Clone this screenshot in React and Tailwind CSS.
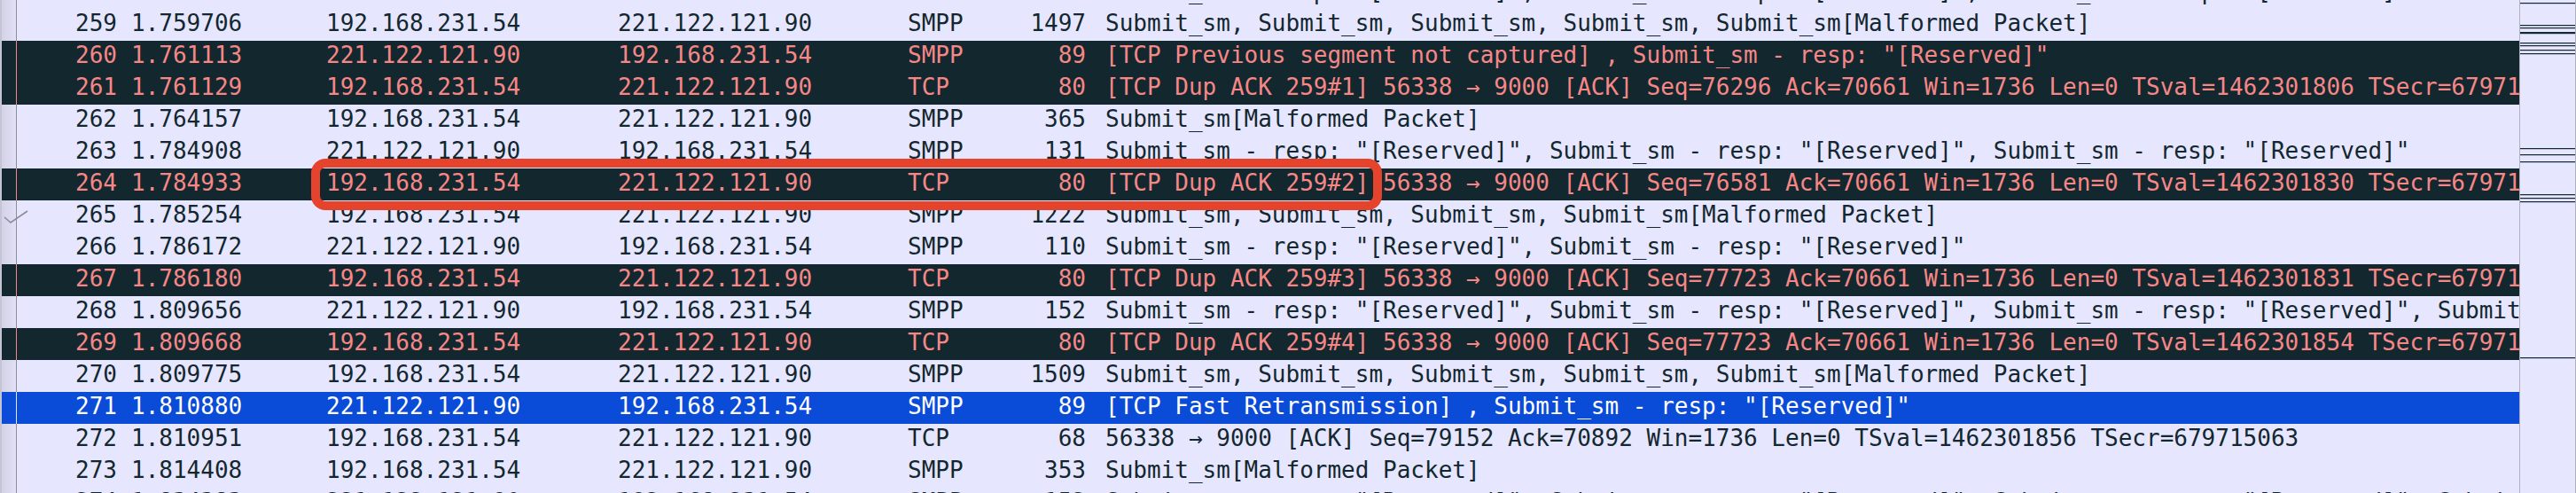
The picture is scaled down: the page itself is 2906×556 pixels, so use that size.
import React from 'react'

// Wireshark-style packet list, coloured by the default rules
const SRC = '192.168.231.54'
const DST = '221.122.121.90'

const resp = 'Submit_sm - resp: "[Reserved]"'
const subs = (n) => Array(n).fill('Submit_sm').join(', ') + '[Malformed Packet]'
const resps = (n) => Array(n).fill(resp).join(', ')
const dup = (n, seq, ts) =>
  `[TCP Dup ACK 259#${n}] 56338 → 9000 [ACK] Seq=${seq} Ack=70661 Win=1736 Len=0 TSval=${ts} TSecr=679715041`

const rows = [
  { no: 258, time: '1.759689', src: DST, dst: SRC, proto: 'SMPP', len: 131, info: resps(3), kind: 'light' },
  { no: 259, time: '1.759706', src: SRC, dst: DST, proto: 'SMPP', len: 1497, info: subs(5), kind: 'light' },
  { no: 260, time: '1.761113', src: DST, dst: SRC, proto: 'SMPP', len: 89, info: '[TCP Previous segment not captured] , ' + resp, kind: 'bad' },
  { no: 261, time: '1.761129', src: SRC, dst: DST, proto: 'TCP', len: 80, info: dup(1, 76296, 1462301806), kind: 'bad' },
  { no: 262, time: '1.764157', src: SRC, dst: DST, proto: 'SMPP', len: 365, info: subs(1), kind: 'light' },
  { no: 263, time: '1.784908', src: DST, dst: SRC, proto: 'SMPP', len: 131, info: resps(3), kind: 'light' },
  { no: 264, time: '1.784933', src: SRC, dst: DST, proto: 'TCP', len: 80, info: dup(2, 76581, 1462301830), kind: 'bad' },
  { no: 265, time: '1.785254', src: SRC, dst: DST, proto: 'SMPP', len: 1222, info: subs(4), kind: 'light', check: true },
  { no: 266, time: '1.786172', src: DST, dst: SRC, proto: 'SMPP', len: 110, info: resps(2), kind: 'light' },
  { no: 267, time: '1.786180', src: SRC, dst: DST, proto: 'TCP', len: 80, info: dup(3, 77723, 1462301831), kind: 'bad' },
  { no: 268, time: '1.809656', src: DST, dst: SRC, proto: 'SMPP', len: 152, info: resps(4), kind: 'light' },
  { no: 269, time: '1.809668', src: SRC, dst: DST, proto: 'TCP', len: 80, info: dup(4, 77723, 1462301854), kind: 'bad' },
  { no: 270, time: '1.809775', src: SRC, dst: DST, proto: 'SMPP', len: 1509, info: subs(5), kind: 'light' },
  { no: 271, time: '1.810880', src: DST, dst: SRC, proto: 'SMPP', len: 89, info: '[TCP Fast Retransmission] , ' + resp, kind: 'selected' },
  { no: 272, time: '1.810951', src: SRC, dst: DST, proto: 'TCP', len: 68, info: '56338 → 9000 [ACK] Seq=79152 Ack=70892 Win=1736 Len=0 TSval=1462301856 TSecr=679715063', kind: 'light' },
  { no: 273, time: '1.814408', src: SRC, dst: DST, proto: 'SMPP', len: 353, info: subs(1), kind: 'light' },
  { no: 274, time: '1.834383', src: DST, dst: SRC, proto: 'SMPP', len: 152, info: resps(4), kind: 'light' },
]

const styles = {
  light: {
    row: 'bg-[#e7e6ff] text-[#12272e]',
    gutter: 'bg-gradient-to-r from-[#d3d2e6] to-[#e1e0f6]',
    line: 'bg-[#8d8d99]',
  },
  bad: {
    row: 'bg-[#12272e] text-[#f78787]',
    gutter: 'bg-[#12272e]',
    line: 'bg-[#f78787]',
  },
  selected: {
    row: 'bg-[#0a4bd7] text-white',
    gutter: 'bg-[#0a4bd7]',
    line: 'bg-[#dfe6fb]',
  },
}

// y positions of the packet-map marks in the scrollbar
const marks = [3, 28, 31, 36, 37, 48, 51, 56, 60, 167, 174, 182, 219, 223, 227, 403]

function PacketRow({ row }) {
  const s = styles[row.kind]
  return (
    <div className={`relative flex h-[36px] leading-[32px] ${s.row}`}>
      <div className="w-[2px] shrink-0 bg-[#c5c4d4]" />
      <div className={`w-[16px] shrink-0 ${s.gutter}`} />
      <div className={`w-px shrink-0 ${s.line}`} />
      <div className="w-[113px] shrink-0 text-right">{row.no}</div>
      <div className="w-[236px] shrink-0 pl-[16px]">{row.time}</div>
      <div className="w-[329px] shrink-0">{row.src}</div>
      <div className="w-[327px] shrink-0">{row.dst}</div>
      <div className="w-[96px] shrink-0">{row.proto}</div>
      <div className="w-[105px] shrink-0 text-right">{row.len}</div>
      <div className="min-w-0 flex-1 overflow-hidden whitespace-nowrap pl-[22px]">{row.info}</div>
      {row.check && (
        <svg className="absolute left-0 top-0" width="36" height="36" viewBox="0 0 36 36">
          <polyline points="5,19 12,25 31,12" fill="none" stroke="#8d8d99" strokeWidth="1.6" />
        </svg>
      )}
    </div>
  )
}

export default function App() {
  return (
    <div className="flex h-[556px] w-[2906px] overflow-hidden bg-[#e7e6ff] font-['DejaVu_Sans_Mono','Liberation_Mono',monospace] text-[26px]">
      <div className="relative w-[2842px] shrink-0 overflow-hidden">
        <div className="mt-[-26px]">
          {rows.map((row) => (
            <PacketRow key={row.no} row={row} />
          ))}
        </div>
        <div className="absolute left-[351px] top-[179px] h-[58px] w-[1208px] rounded-[16px] border-[10px] border-[#e5432b]" />
      </div>
      <div className="w-px shrink-0 bg-[#b1b1bb]" />
      <div className="w-[62px] shrink-0">
        <svg width="62" height="556" viewBox="0 0 62 556">
          {marks.map((y, i) => (
            <rect key={i} x="0" y={y} width="62" height="1.2" fill="#12272e" />
          ))}
        </svg>
      </div>
      <div className="w-px shrink-0 bg-[#b1b1bb]" />
    </div>
  )
}
